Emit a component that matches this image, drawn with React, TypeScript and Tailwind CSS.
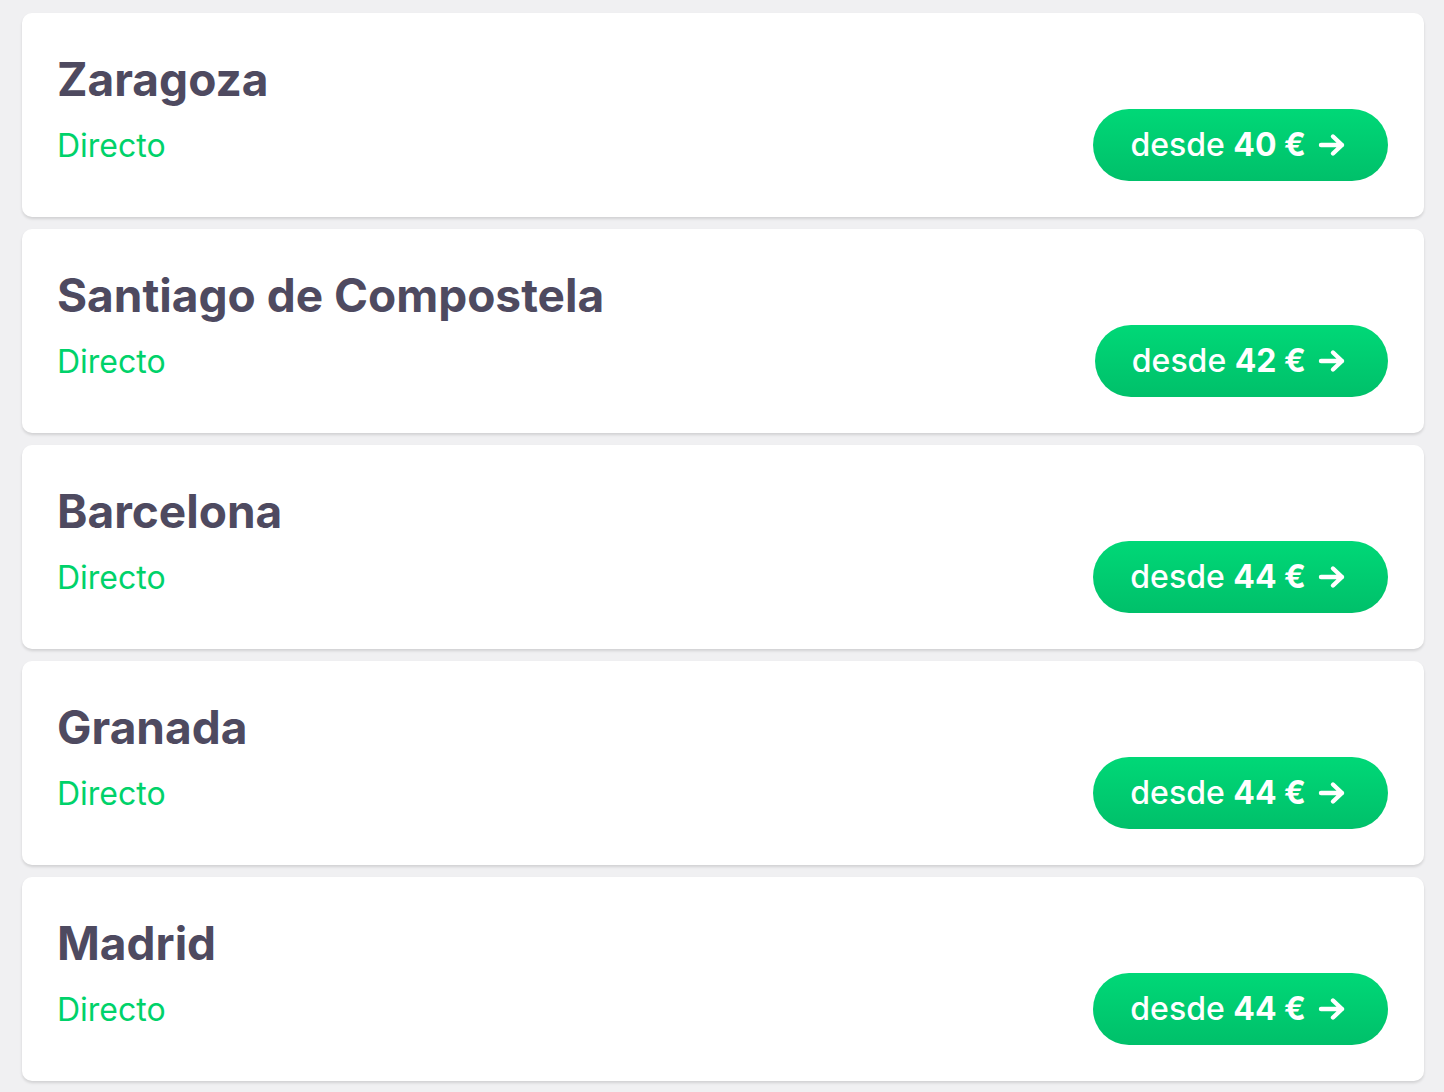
const routes = [
  { city: "Zaragoza", price: 40 },
  { city: "Santiago de Compostela", price: 42 },
  { city: "Barcelona", price: 44 },
  { city: "Granada", price: 44 },
  { city: "Madrid", price: 44 },
];

export default function App() {
  return (
    <div
      className="min-h-screen bg-[#f0f0f2] pl-[22px] pr-5 pt-[13px] pb-[11px]"
      style={{ fontFamily: "Inter, 'Noto Sans', sans-serif" }}
    >
      <div className="flex flex-col gap-3">
        {routes.map((r) => (
          <RouteCard key={r.city} city={r.city} price={r.price} />
        ))}
      </div>
    </div>
  );
}

function Arrow() {
  return (
    <svg viewBox="0 0 28 24" className="h-[24px] w-[28px]" fill="none" stroke="currentColor" strokeWidth={4.4} strokeLinecap="round" strokeLinejoin="round">
      <path d="M3 12h21M15 3.5l9 8.5-9 8.5" />
    </svg>
  );
}

function RouteCard({ city, price }: { city: string; price: number }) {
  return (
    <div className="flex h-[204px] items-end justify-between rounded-[10px] bg-white pl-[35px] pr-9 pt-[41px] pb-9 shadow-[0_2px_3px_rgba(0,0,0,0.13)]">
      <div className="flex h-full flex-col">
        <h2 className="text-[46px] font-bold leading-[1.1] text-[#4e4a60]">{city}</h2>
        <p className="mt-[22px] text-[32px] leading-[1.2] text-[#00d26a]">Directo</p>
      </div>
      <button
        type="button"
        className="flex h-[72px] items-center gap-[12px] rounded-full bg-gradient-to-b from-[#00d877] to-[#00c06a] pl-[37px] pr-[42px] text-[32px] font-medium text-white"
      >
        <span>
          desde <span className="font-bold">{price} €</span>
        </span>
        <Arrow />
      </button>
    </div>
  );
}
